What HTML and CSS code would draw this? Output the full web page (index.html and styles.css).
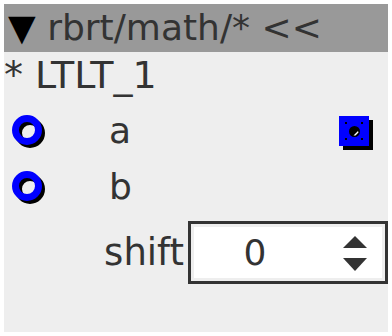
FILE: index.html
```html
<!DOCTYPE html>
<html>
<head>
<meta charset="utf-8">
<link rel="stylesheet" href="styles.css">
</head>
<body>
<div class="panel">
  <div class="header"><span class="tri">▼</span> rbrt/math/* &lt;&lt;</div>
  <div class="title">* LTLT_1</div>
  <div class="rows">
    <div class="row">
      <svg class="ring" width="40" height="40" viewBox="0 0 40 40">
        <circle cx="18" cy="18" r="11.5" fill="none" stroke="#000" stroke-width="7"/>
        <circle cx="15" cy="15" r="11.5" fill="none" stroke="#0000ff" stroke-width="7"/>
      </svg>
      <span class="label">a</span>
      <svg class="square" width="36" height="36" viewBox="0 0 36 36">
        <rect x="4" y="4" width="30" height="30" fill="#000"/>
        <rect x="0" y="0" width="30" height="30" fill="#0000ff"/>
        <rect x="6" y="6" width="2" height="2" fill="#000"/>
        <rect x="22" y="6" width="2" height="2" fill="#000"/>
        <rect x="6" y="22" width="2" height="2" fill="#000"/>
        <rect x="22" y="22" width="2" height="2" fill="#000"/>
        <circle cx="15.5" cy="15.5" r="5.5" fill="#000"/>
        <path d="M19 15 L14.5 19.5 L16.5 19.5 L19.5 16.5 Z" fill="#fff"/>
      </svg>
    </div>
    <div class="row">
      <svg class="ring" width="40" height="40" viewBox="0 0 40 40">
        <circle cx="18" cy="18" r="11.5" fill="none" stroke="#000" stroke-width="7"/>
        <circle cx="15" cy="15" r="11.5" fill="none" stroke="#0000ff" stroke-width="7"/>
      </svg>
      <span class="label">b</span>
    </div>
    <div class="shift-row">
      <span class="shift-label">shift</span>
      <div class="spin">
        <div class="spin-inner">
          <span class="value">0</span>
          <svg class="arrows" width="24" height="36" viewBox="0 0 24 36">
            <path d="M12 0 L24 12 L0 12 Z" fill="#333"/>
            <path d="M0 22 L24 22 L12 35 Z" fill="#333"/>
          </svg>
        </div>
      </div>
    </div>
  </div>
</div>
</body>
</html>
```

FILE: styles.css
```css
html, body {
  margin: 0;
  padding: 0;
  background: #ffffff;
}
body {
  padding: 4px;
  font-family: "DejaVu Sans", sans-serif;
  color: #333333;
}
.panel {
  width: 384px;
  height: 328px;
  background: #eeeeee;
  display: flex;
  flex-direction: column;
}
.header {
  height: 48px;
  line-height: 48px;
  background: #999999;
  font-size: 36px;
  white-space: nowrap;
  padding-left: 4px;
}
.tri {
  color: #000;
}
.title {
  height: 48px;
  line-height: 46px;
  font-size: 38px;
  white-space: nowrap;
}
.rows {
  display: flex;
  flex-direction: column;
  margin-top: 3px;
}
.row {
  height: 56px;
  display: flex;
  align-items: center;
  padding-left: 8px;
}
.ring {
  display: block;
  margin-top: 8px;
}
.label {
  font-size: 36px;
  line-height: 56px;
  margin-left: 57px;
  flex: 1;
}
.square {
  display: block;
  margin-right: 13px;
  margin-top: 6px;
}
.shift-row {
  display: flex;
  align-items: center;
  justify-content: flex-end;
  margin-top: 6px;
  gap: 4px;
}
.shift-label {
  font-size: 37px;
}
.spin {
  border: 3px solid #333333;
  padding: 3px;
  background: #eeeeee;
  width: 188px;
  height: 51px;
}
.spin-inner {
  width: 100%;
  height: 100%;
  background: #ffffff;
  display: flex;
  align-items: center;
}
.value {
  font-size: 36px;
  width: 122px;
  text-align: center;
}
.arrows {
  display: block;
  margin-left: 27px;
  margin-top: 3px;
}
```
